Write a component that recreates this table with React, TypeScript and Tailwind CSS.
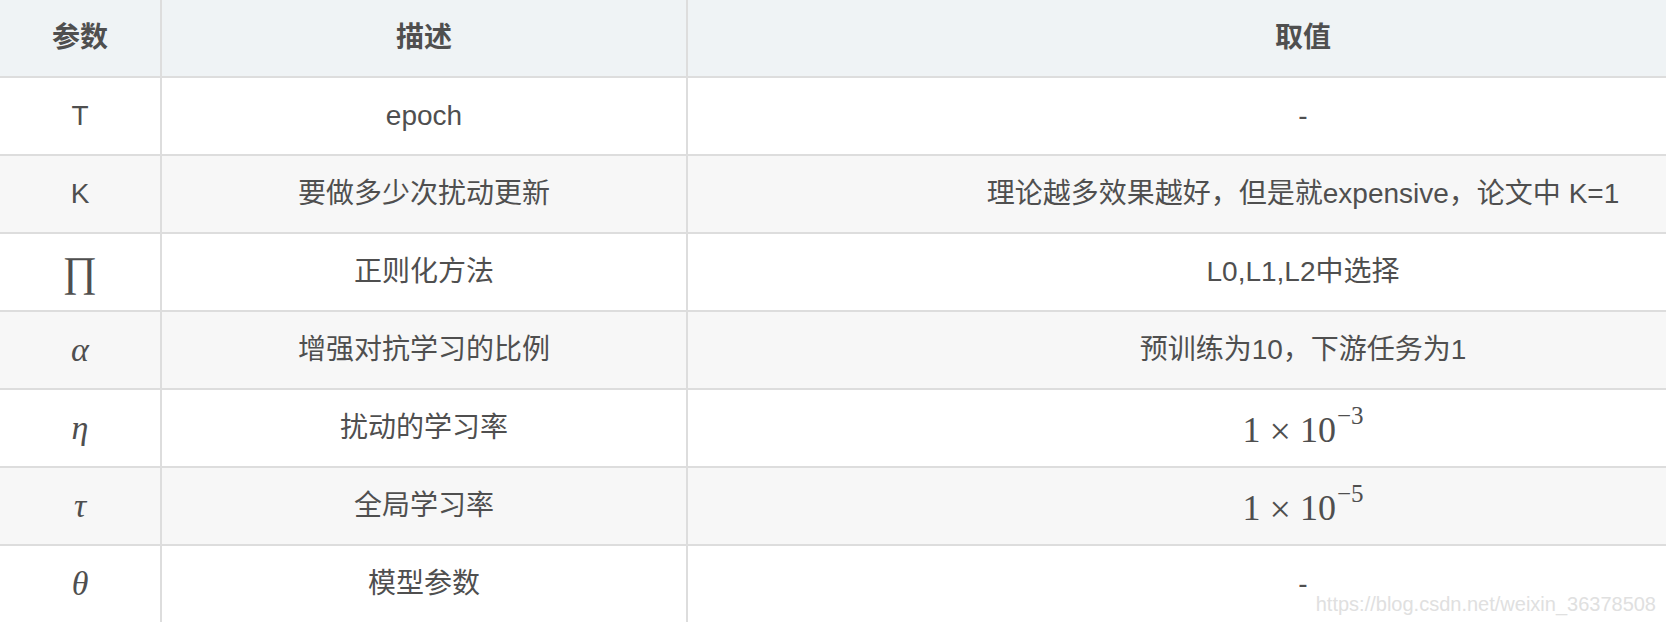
import React from 'react';

type Row = {
  sym: React.ReactNode;
  desc: string;
  value: React.ReactNode;
};

const MATH = { fontFamily: '"Liberation Serif", "DejaVu Serif", serif' };

function Sci({ exp }: { exp: string }) {
  return (
    <span className="text-[36px] leading-none text-[#4f4f4f] inline-flex items-start" style={MATH}>
      <span className="mt-[5px]">1</span>
      <span className="mx-[9px] mt-[5px] text-[38px]">×</span>
      <span className="mt-[5px]">10</span>
      <span className="text-[25px] ml-[1px] -mt-[4px]">−{exp}</span>
    </span>
  );
}

function Greek({ ch }: { ch: string }) {
  return (
    <span className="text-[34px] italic leading-none" style={MATH}>
      {ch}
    </span>
  );
}

const ROWS: Row[] = [
  { sym: 'T', desc: 'epoch', value: '-' },
  { sym: 'K', desc: '要做多少次扰动更新', value: '理论越多效果越好，但是就expensive，论文中 K=1' },
  {
    sym: (
      <span className="text-[42px] leading-none" style={MATH}>
        ∏
      </span>
    ),
    desc: '正则化方法',
    value: 'L0,L1,L2中选择',
  },
  { sym: <Greek ch="α" />, desc: '增强对抗学习的比例', value: '预训练为10，下游任务为1' },
  { sym: <Greek ch="η" />, desc: '扰动的学习率', value: <Sci exp="3" /> },
  { sym: <Greek ch="τ" />, desc: '全局学习率', value: <Sci exp="5" /> },
  { sym: <Greek ch="θ" />, desc: '模型参数', value: '-' },
];

export default function App() {
  return (
    <div
      className="relative w-[1666px] h-[622px] overflow-hidden bg-white text-[#4f4f4f]"
      style={{ fontFamily: '"Liberation Sans", "Noto Sans CJK SC", sans-serif' }}
    >
      {/* table is wider than the viewport; last column runs off the right edge */}
      <div className="grid w-[1918px] grid-cols-[160px_524px_1230px] auto-rows-[76px] gap-[2px] bg-[#dddddd]">
        <div className="bg-[#eff3f5] flex items-center justify-center text-[28px] font-bold">参数</div>
        <div className="bg-[#eff3f5] flex items-center justify-center text-[28px] font-bold">描述</div>
        <div className="bg-[#eff3f5] flex items-center justify-center text-[28px] font-bold">取值</div>

        {ROWS.map((r, i) => {
          const bg = i % 2 === 1 ? 'bg-[#f7f7f7]' : 'bg-white';
          return (
            <React.Fragment key={i}>
              <div className={`${bg} flex items-center justify-center text-[28px]`}>{r.sym}</div>
              <div className={`${bg} flex items-center justify-center text-[28px]`}>{r.desc}</div>
              <div className={`${bg} flex items-center justify-center text-[28px]`}>{r.value}</div>
            </React.Fragment>
          );
        })}
      </div>

      {/* watermark */}
      <div className="absolute right-[10px] bottom-[8px] text-[20px] text-[#e0e0e0] leading-none">
        https://blog.csdn.net/weixin_36378508
      </div>
    </div>
  );
}
